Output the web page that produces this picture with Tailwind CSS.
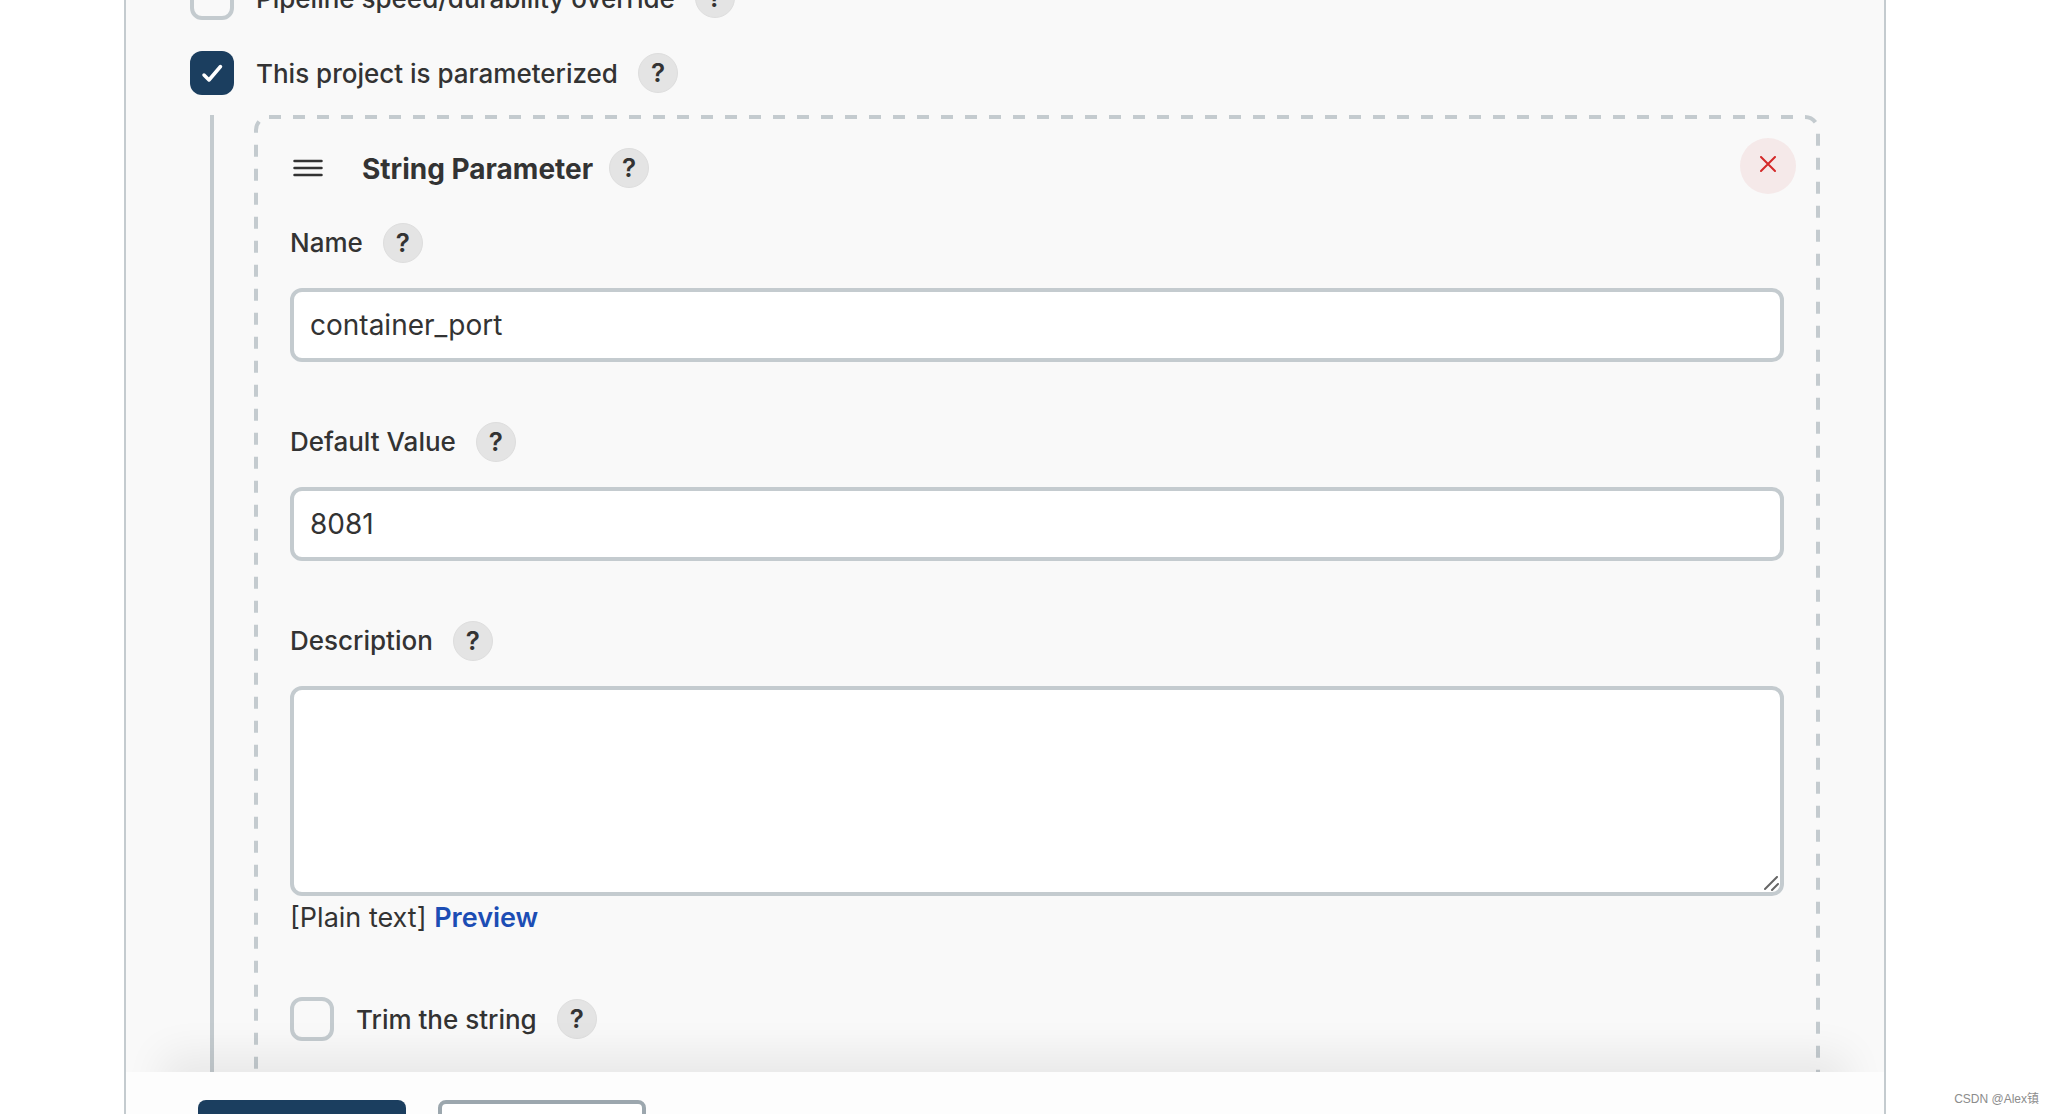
<!DOCTYPE html>
<html lang="en">
<head>
<meta charset="utf-8">
<title>Configure</title>
<script src="https://cdn.jsdelivr.net/npm/@tailwindcss/browser@4"></script>
</head>
<body class="bg-white font-[Inter,'Noto_Sans_CJK_SC',sans-serif] text-[26px] leading-[40px] text-[#333333]">
<div class="relative h-screen overflow-hidden">
  <main class="ml-[124px] mr-[168px] flex h-full flex-col overflow-hidden border-x-2 border-[#c4cbcf] bg-[#f9f9f9]">
    <form id="config" class="min-h-0 flex-1 px-16">
      <div class="-mt-6 flex h-11 items-center">
        <input id="speed" type="checkbox" class="size-11 appearance-none rounded-xl border-4 border-[#c4cbcf]">
        <label for="speed" class="ml-[22px] pt-0.5 font-medium">Pipeline speed/durability override</label>
        <button type="button" class="ml-5 size-10 rounded-full border border-[#dedede] bg-[#e4e4e4] text-[26px] leading-none font-semibold">?</button>
      </div>
      <div class="mt-[31px] flex h-11 items-center">
        <span class="relative flex size-11">
          <input id="param" type="checkbox" checked class="size-11 appearance-none rounded-xl bg-[#1b3e5f]">
          <svg class="pointer-events-none absolute inset-0 size-11" viewBox="0 0 44 44" fill="none" stroke="#fff" stroke-width="3.500" stroke-linecap="round" stroke-linejoin="round"><path d="M14 24 19 29 30.500 15.500"/></svg>
        </span>
        <label for="param" class="ml-[22px] pt-0.5 font-medium">This project is parameterized</label>
        <button type="button" class="ml-5 size-10 rounded-full border border-[#dedede] bg-[#e4e4e4] text-[26px] leading-none font-semibold">?</button>
      </div>
      <div class="mt-5 ml-5 border-l-4 border-[#c4cbcf] pl-10">
        <section class="relative px-9 pt-[23px] pb-[47px]">
          <svg class="pointer-events-none absolute inset-0 size-full overflow-visible" fill="none" stroke="#c4cbcf" stroke-width="4" stroke-dasharray="12 12"><rect x="2" y="2" rx="13" class="h-[calc(100%-4px)] w-[calc(100%-4px)]"/></svg>
          <header class="flex h-[60px] items-center">
            <svg class="ml-0.5 h-8 w-8" viewBox="0 0 32 32" fill="none" stroke="#333" stroke-width="2.500" stroke-linecap="round"><path d="M2.500 9H29.500M2.500 16H29.500M2.500 23H29.500"/></svg>
            <h2 class="ml-[38px] pt-0.5 text-[28px] font-bold">String Parameter</h2>
            <button type="button" class="ml-4 size-10 rounded-full border border-[#dedede] bg-[#e4e4e4] text-[26px] leading-none font-semibold">?</button>
            <button type="button" aria-label="Delete" class="-mr-3 mb-1 ml-auto flex size-14 items-center justify-center rounded-full bg-[#f5e9e9] pb-1">
              <svg class="size-4" viewBox="0 0 16 16" fill="none" stroke="#d42a2a" stroke-width="2" stroke-linecap="round"><path d="M1 1 15 15M15 1 1 15"/></svg>
            </button>
          </header>
          <div class="mt-[25px] flex h-10 items-center">
            <label for="name" class="font-medium">Name</label>
            <button type="button" class="ml-5 size-10 rounded-full border border-[#dedede] bg-[#e4e4e4] text-[26px] leading-none font-semibold">?</button>
          </div>
          <input id="name" type="text" value="container_port" class="mt-[25px] block h-[74px] w-full rounded-xl border-4 border-[#c4cbcf] bg-white px-4 text-[28px]">
          <div class="mt-[60px] flex h-10 items-center">
            <label for="default" class="font-medium">Default Value</label>
            <button type="button" class="ml-5 size-10 rounded-full border border-[#dedede] bg-[#e4e4e4] text-[26px] leading-none font-semibold">?</button>
          </div>
          <input id="default" type="text" value="8081" class="mt-[25px] block h-[74px] w-full rounded-xl border-4 border-[#c4cbcf] bg-white px-4 text-[28px]">
          <div class="mt-[60px] flex h-10 items-center">
            <label for="desc" class="font-medium">Description</label>
            <button type="button" class="ml-5 size-10 rounded-full border border-[#dedede] bg-[#e4e4e4] text-[26px] leading-none font-semibold">?</button>
          </div>
          <div class="relative mt-[25px]">
            <textarea id="desc" class="block h-[210px] w-full resize-none rounded-xl border-4 border-[#c4cbcf] bg-white px-4 text-[28px]"></textarea>
            <svg class="pointer-events-none absolute right-1 bottom-1 size-4" viewBox="0 0 16 16" fill="none" stroke="#666" stroke-width="2" stroke-linecap="round"><path d="M1 13 13 1M8 14 14 8"/></svg>
          </div>
          <p class="mt-0.5 text-[27px]">[Plain text] <a href="#preview" class="font-semibold text-[#1c4db4]">Preview</a></p>
          <div class="mt-[59px] flex h-11 items-center">
            <input id="trim" type="checkbox" class="size-11 appearance-none rounded-xl border-4 border-[#c4cbcf]">
            <label for="trim" class="ml-[22px] pt-0.5 font-medium">Trim the string</label>
            <button type="button" class="ml-5 size-10 rounded-full border border-[#dedede] bg-[#e4e4e4] text-[26px] leading-none font-semibold">?</button>
          </div>
        </section>
      </div>
    </form>
    <footer class="relative z-10 -mb-[98px] flex shrink-0 gap-8 bg-[#fdfdfd] px-[72px] pt-7 pb-7 shadow-[0_-54px_40px_-36px_rgba(0,0,0,0.07)]">
      <button type="submit" form="config" aria-label="Save" class="h-21 w-52 rounded-lg bg-[#1b3e5f]"></button>
      <button type="button" aria-label="Apply" class="h-21 w-52 rounded-lg border-4 border-[#9ca7ae] bg-white"></button>
    </footer>
  </main>
  <small class="absolute right-[15px] bottom-[5px] font-['Liberation_Sans','Noto_Sans_CJK_SC',sans-serif] text-[12px] leading-5 text-[#8c8c8c]">CSDN @Alex镇</small>
</div>
</body>
</html>
